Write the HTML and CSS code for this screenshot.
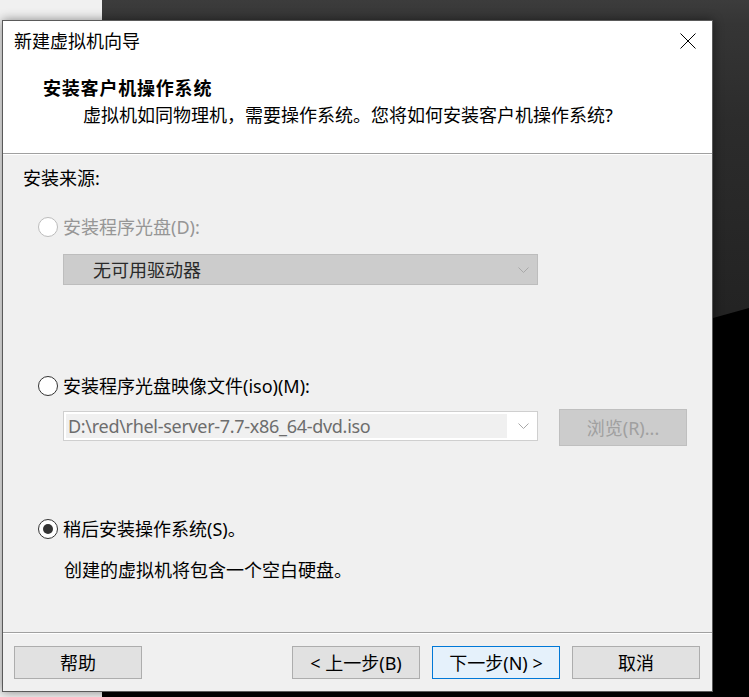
FILE: index.html
```html
<!DOCTYPE html>
<html lang="zh-CN">
<head>
<meta charset="utf-8">
<title>新建虚拟机向导</title>
<link rel="stylesheet" href="styles.css">
</head>
<body>
<div class="desktop">
  <div class="win-behind-left"></div>
  <div class="win-behind-dark"></div>
  <div class="dialog">
    <div class="titlebar">
      <span class="title">新建虚拟机向导</span>
      <svg class="close" width="16" height="16" viewBox="0 0 16 16"><path d="M0.5 0.5 L15.5 15.5 M15.5 0.5 L0.5 15.5" stroke="#000" stroke-width="1" fill="none"/></svg>
    </div>
    <div class="header">
      <div class="h-title">安装客户机操作系统</div>
      <div class="h-sub">虚拟机如同物理机，需要操作系统。您将如何安装客户机操作系统?</div>
    </div>
    <div class="content">
      <div class="section-label">安装来源:</div>
      <div class="radio-row disabled row-disc">
        <span class="radio"></span><span class="radio-text">安装程序光盘(D):</span>
      </div>
      <div class="select disabled">
        <span class="select-text">无可用驱动器</span>
        <svg class="chev" width="11" height="6" viewBox="0 0 11 6"><path d="M0.5 0.5 L5.5 5.5 L10.5 0.5" stroke="#a8a8a8" fill="none"/></svg>
      </div>
      <div class="radio-row row-iso">
        <span class="radio"></span><span class="radio-text">安装程序光盘映像文件(iso)(M):</span>
      </div>
      <div class="combo-row">
        <div class="combo">
          <span class="combo-text">D:\red\rhel-server-7.7-x86_64-dvd.iso</span>
          <span class="combo-arrow"><svg class="chev" width="11" height="6" viewBox="0 0 11 6"><path d="M0.5 0.5 L5.5 5.5 L10.5 0.5" stroke="#a8a8a8" fill="none"/></svg></span>
        </div>
        <div class="btn btn-disabled browse">浏览(R)...</div>
      </div>
      <div class="radio-row row-later">
        <span class="radio checked"></span><span class="radio-text">稍后安装操作系统(S)。</span>
      </div>
      <div class="desc">创建的虚拟机将包含一个空白硬盘。</div>
    </div>
    <div class="footer">
      <div class="btn">帮助</div>
      <div class="footer-right">
        <div class="btn">&lt; 上一步(B)</div>
        <div class="btn btn-default">下一步(N) &gt;</div>
        <div class="btn">取消</div>
      </div>
    </div>
  </div>
</div>
</body>
</html>
```

FILE: styles.css
```css
* { box-sizing: border-box; }

html, body {
  margin: 0;
  padding: 0;
  width: 749px;
  height: 697px;
  overflow: hidden;
  background: #000;
}

body {
  font-family: "Noto Sans", "Noto Sans CJK SC", sans-serif;
  font-size: 18px;
  color: #000;
}

.desktop {
  position: relative;
  width: 749px;
  height: 697px;
  background: #000;
}

.win-behind-left {
  position: absolute;
  left: 0;
  top: 0;
  width: 102px;
  height: 697px;
  background: #f0f0f0;
  box-shadow: 2px 0 4px rgba(0,0,0,0.25);
}

.win-behind-dark {
  position: absolute;
  left: 102px;
  top: 0;
  width: 647px;
  height: 500px;
  background: linear-gradient(#3c3c3c 0, #353535 24px, #2c2c2c 120px, #232323 310px);
  clip-path: polygon(0 0, 100% 0, 100% 308px, 0 488px);
}

.dialog {
  position: absolute;
  left: 2px;
  top: 20px;
  width: 711px;
  height: 672px;
  border: 1px solid #5a5a5a;
  background: #f0f0f0;
  display: flex;
  flex-direction: column;
  box-shadow: 0 0 10px rgba(0,0,0,0.45);
}

.titlebar {
  height: 40px;
  flex: none;
  background: #fff;
  display: flex;
  align-items: center;
  padding-left: 11px;
}

.title {
  line-height: 24px;
}

.close {
  margin-left: auto;
  margin-right: 16px;
  display: block;
}

.header {
  flex: none;
  height: 93px;
  background: #fff;
  border-bottom: 1px solid #a0a0a0;
  padding: 14px 0 0 40px;
}

.h-title {
  font-family: "Noto Sans CJK SC", sans-serif;
  font-weight: 700;
  line-height: 24px;
  letter-spacing: 0.8px;
}

.h-sub {
  margin-top: 4px;
  margin-left: 40px;
  line-height: 24px;
}

.content {
  flex: 1;
  border-top: 1px solid #fff;
  display: flex;
  flex-direction: column;
  align-items: flex-start;
}

.section-label {
  margin-top: 11px;
  margin-left: 20px;
  line-height: 24px;
}

.radio-row {
  display: flex;
  align-items: center;
  height: 24px;
  margin-left: 35px;
  gap: 5px;
}

.row-disc { margin-top: 25px; }
.row-iso { margin-top: 89px; }
.row-later { margin-top: 71px; }

.radio {
  width: 20px;
  height: 20px;
  border-radius: 50%;
  border: 1px solid #333;
  background: #fff;
  position: relative;
  flex: none;
}

.radio.checked::after {
  content: "";
  position: absolute;
  left: 4px;
  top: 4px;
  width: 10px;
  height: 10px;
  border-radius: 50%;
  background: #333;
}

.radio-text {
  line-height: 24px;
}

.radio-row.disabled .radio {
  border-color: #bcbcbc;
}

.radio-row.disabled .radio-text {
  color: #969696;
}

.select {
  margin-top: 15px;
  margin-left: 60px;
  width: 475px;
  height: 31px;
  border: 1px solid #bdbdbd;
  background: #cccccc;
  display: flex;
  align-items: center;
  padding-left: 29px;
  padding-right: 8px;
}

.select-text {
  color: #2a2a2a;
  line-height: 24px;
  flex: 1;
}

.chev {
  display: block;
}

.combo-row {
  margin-top: 11px;
  margin-left: 60px;
  display: flex;
  align-items: flex-start;
  gap: 21px;
}

.combo {
  margin-top: 2px;
  width: 475px;
  height: 30px;
  border: 1px solid #cfcfcf;
  background: #fff;
  padding: 2px;
  display: flex;
}

.combo-text {
  flex: 1;
  background: #f0f0f0;
  color: #6d6d6d;
  line-height: 24px;
  padding-left: 2px;
  letter-spacing: -0.3px;
  white-space: nowrap;
}

.combo-arrow {
  width: 28px;
  display: flex;
  align-items: center;
  justify-content: flex-end;
  padding-right: 6px;
}

.btn {
  width: 128px;
  height: 33px;
  border: 1px solid #adadad;
  background: #e1e1e1;
  display: flex;
  align-items: center;
  justify-content: center;
  line-height: 24px;
  white-space: nowrap;
}

.btn-disabled {
  background: #cccccc;
  border-color: #bfbfbf;
  color: #a0a0a0;
}

.browse {
  height: 37px;
}

.btn-default {
  background: #e5f1fb;
  border-color: #0078d7;
}

.desc {
  margin-top: 17px;
  margin-left: 61px;
  line-height: 24px;
}

.footer {
  flex: none;
  height: 59px;
  border-top: 1px solid #a0a0a0;
  box-shadow: inset 0 1px 0 #fff;
  padding: 13px 12px 12px 11px;
  display: flex;
  justify-content: space-between;
}

.footer-right {
  display: flex;
  gap: 12px;
}
```
